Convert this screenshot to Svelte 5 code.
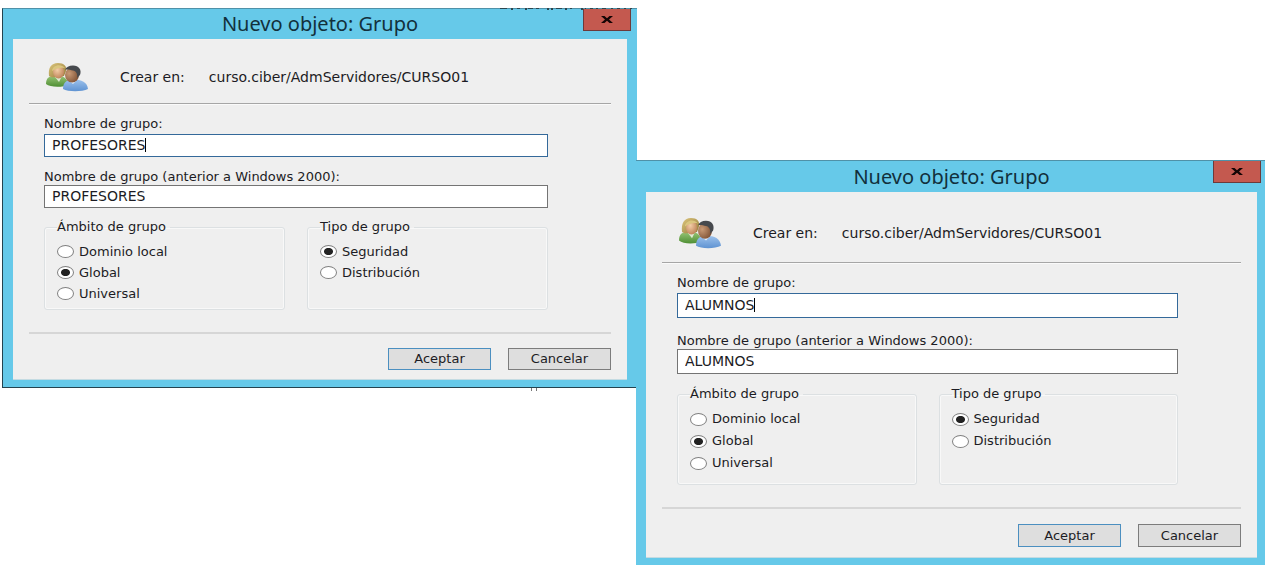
<script>
  const dialogs = [
    { id: 'profesores', name: 'PROFESORES', variant: 'compact' },
    { id: 'alumnos', name: 'ALUMNOS', variant: 'roomy' }
  ];
  const scopes = ['Dominio local', 'Global', 'Universal'];
  const kinds = ['Seguridad', 'Distribución'];
</script>

<main class="desktop">
  {#each dialogs as d}
    <section class="window {d.variant}" aria-labelledby="{d.id}-title">
      {#if d.variant === 'compact'}
        <svg class="remnant top" width="139" height="2" aria-hidden="true">
          <path d="M2 0h7v1h-7zM13 0h2v2h-2zM19 0h3v1h-3zM27 0h2v2h-2zM30 0h5v1h-5zM38 0h3v1h-3zM49 0h2v2h-2zM53 0h2v2h-2zM58 0h6v1h-6zM67 0h2v2h-2zM72 0h2v1h-2zM83 0h2v2h-2zM87 0h1v1h-1zM92 0h3v1h-3zM98 0h2v2h-2zM104 0h4v1h-4zM113 0h2v2h-2zM119 0h3v1h-3zM126 0h2v2h-2zM132 0h2v1h-2z" fill="#2c4650" />
        </svg>
        <svg class="remnant bottom" width="8" height="3" aria-hidden="true">
          <path d="M1.500 0v3M6.500 0v3" stroke="#777" stroke-width="1" />
        </svg>
      {/if}
      <header class="titlebar">
        <h1 id="{d.id}-title">Nuevo objeto: Grupo</h1>
        <button class="close" type="button" aria-label="Cerrar">
          <svg width="14" height="9" viewBox="0 0 14 9" aria-hidden="true">
            <path d="M1 1H4.500L7 3.200L9.500 1H13L9 4.500L13 8H9.500L7 5.800L4.500 8H1L5 4.500Z" fill="#150505" />
          </svg>
        </button>
      </header>
      <form class="client" onsubmit={(e) => e.preventDefault()}>
        <div class="place">
          <svg class="people" viewBox="0 0 44 30" preserveAspectRatio="none" aria-hidden="true">
            <defs>
              <linearGradient id="{d.id}-green" x1="0" y1="0" x2="0" y2="1">
                <stop offset="0" stop-color="#9ac779" /><stop offset="1" stop-color="#4f8f34" />
              </linearGradient>
              <linearGradient id="{d.id}-blue" x1="0" y1="0" x2="0" y2="1">
                <stop offset="0" stop-color="#9dc2ec" /><stop offset="1" stop-color="#5f93d2" />
              </linearGradient>
              <linearGradient id="{d.id}-hair" x1="0" y1="0" x2="1" y2="1">
                <stop offset="0" stop-color="#dcc67c" /><stop offset="1" stop-color="#94793a" />
              </linearGradient>
              <radialGradient id="{d.id}-fair" cx="0.4" cy="0.35" r="0.7">
                <stop offset="0" stop-color="#f3cda6" /><stop offset="1" stop-color="#bd8157" />
              </radialGradient>
              <radialGradient id="{d.id}-dark" cx="0.3" cy="0.4" r="0.8">
                <stop offset="0" stop-color="#c99a75" /><stop offset="1" stop-color="#76492d" />
              </radialGradient>
            </defs>
            <path d="M1 22C1 16 4 14 10 13.500C18 13 22 16 24 23C17 25.500 5 25.500 1 22Z" fill="url(#{d.id}-green)" />
            <path d="M10 15L14 20L17 14Z" fill="#dfead2" />
            <path d="M4 14C3 6 6 1 13 1C19 1 22 4 21 9L19 14L7 15.500Z" fill="url(#{d.id}-hair)" />
            <ellipse cx="13.500" cy="10" rx="5.500" ry="6.500" fill="url(#{d.id}-fair)" />
            <path d="M7 9C7 3 16 1 20 6C16 5 11 6 7 9Z" fill="#dac67f" />
            <path d="M18 27C18 20 22 17.500 28 17.500C37 17.500 42 20 43 27C37 30 23 30 18 27Z" fill="url(#{d.id}-blue)" />
            <path d="M23 18L28 22L32 18Z" fill="#e3eefa" />
            <ellipse cx="27" cy="13" rx="7" ry="7.500" fill="url(#{d.id}-dark)" />
            <path d="M20 8C21 5 24 3.500 28 3.500C34 3.500 37 8 35 13L32 16C33 12 31 9 28 8.500C25 8 22 7 20 8Z" fill="#46494d" />
          </svg>
          <span class="where">Crear en:</span>
          <span>curso.ciber/AdmServidores/CURSO01</span>
        </div>
        <hr class="fine" />
        <div class="fields">
          <label for="{d.id}-name">Nombre de grupo:</label>
          <div class="box active">
            <input id="{d.id}-name" value={d.name} />
            <span class="caret"></span>
          </div>
          <label class="second" for="{d.id}-old">Nombre de grupo (anterior a Windows 2000):</label>
          <div class="box"><input id="{d.id}-old" value={d.name} /></div>
          <div class="groups">
            <fieldset>
              <legend>Ámbito de grupo</legend>
              {#each scopes as s}
                <label class="option"><input type="radio" name="{d.id}-scope" value={s} checked={s === 'Global'} />{s}</label>
              {/each}
            </fieldset>
            <fieldset>
              <legend>Tipo de grupo</legend>
              {#each kinds as k}
                <label class="option"><input type="radio" name="{d.id}-kind" value={k} checked={k === 'Seguridad'} />{k}</label>
              {/each}
            </fieldset>
          </div>
        </div>
        <hr class="thick" />
        <div class="actions">
          <button class="push default" type="submit">Aceptar</button>
          <button class="push" type="button">Cancelar</button>
        </div>
      </form>
    </section>
  {/each}
</main>

<style>
  :global(body) { background: #fff; }

  .desktop {
    display: grid;
    grid-template-columns: 634fr 629fr;
    align-items: start;
    padding: 8px 4px 0 2px;
    font-family: "DejaVu Sans", sans-serif;
    font-size: 13px;
    line-height: 16px;
    color: #1c1c24;
  }

  .window {
    position: relative;
    box-sizing: border-box;
    background: #66c9e9;
    border-top: 1px solid #4f91a8;
  }
  .compact {
    --head: 30px; --icon: 30px; --place: 64px; --box: 23px; --gap: 12px;
    --row: 21px; --group: 91px; --groupgap: 11px; --push: 22px; --above: 14px; --foot: 9px;
    margin-right: -1px;
    border-left: 1px solid #24434f;
    border-bottom: 1px solid #24434f;
    padding: 0 10px 7px 10px;
  }
  .roomy {
    --head: 31px; --icon: 32px; --place: 70px; --box: 25px; --gap: 15px;
    --row: 22px; --group: 99px; --groupgap: 12px; --push: 23px; --above: 15px; --foot: 10px;
    margin-top: 152px;
    padding: 0 8px 7px 10px;
  }

  .remnant { position: absolute; display: block; }
  .top { top: -1px; right: 0; }
  .bottom { bottom: -4px; left: 527px; }

  .titlebar {
    position: relative;
    height: var(--head);
    display: flex;
    justify-content: center;
    align-items: center;
  }
  h1 {
    margin: 0;
    font: 400 20px/24px "Noto Sans", sans-serif;
    color: #12303c;
  }
  .close {
    position: absolute;
    top: 0;
    right: -4px;
    box-sizing: border-box;
    width: 48px;
    height: 22px;
    padding: 0;
    display: grid;
    place-items: center;
    background: #c4594f;
    border: 1px solid #6d3a3a;
    border-top: 0;
  }

  .client {
    box-sizing: border-box;
    background: #efefef;
    border-bottom: 1px solid #c4dbe2;
    padding: 0 16px var(--foot);
  }
  .place {
    display: flex;
    align-items: center;
    height: var(--place);
    padding: 12px 0 0 16px;
    box-sizing: border-box;
    font-size: 14px;
  }
  .people { width: 44px; height: var(--icon); }
  .where { margin: 0 24px 0 31px; }
  hr { margin: 0; border: 0; }
  .fine { height: 1px; background: #a6a6a6; border-bottom: 1px solid #fafafa; }
  .thick { height: 2px; background: #d6d6d6; margin-top: 22px; }

  .fields { padding: 11px 63px 0 15px; }
  .fields > label { display: block; margin-bottom: 2px; }
  .fields > .second { margin-top: var(--gap); margin-bottom: 0; }
  .box {
    display: flex;
    align-items: center;
    box-sizing: border-box;
    height: var(--box);
    padding: 0 7px 2px;
    background: #fff;
    border: 1px solid #747474;
    font-size: 14px;
  }
  .active { border-color: #34699a; }
  .box input {
    font: inherit;
    color: inherit;
    min-width: 0;
    padding: 0;
    border: 0;
    outline: 0;
    background: transparent;
    field-sizing: content;
  }
  .caret { width: 1px; height: 14px; background: #000; }

  .groups {
    display: grid;
    grid-template-columns: 1fr 1fr;
    gap: 22px;
    margin-top: var(--groupgap);
  }
  fieldset {
    box-sizing: border-box;
    height: var(--group);
    min-width: 0;
    margin: 0;
    padding: 6px 12px 0;
    border: 1px solid #dce0e2;
    border-radius: 3px;
    box-shadow: inset 0 0 0 1px #f8f8f8;
  }
  legend { padding: 0 4px 0 0; }
  .option {
    display: flex;
    align-items: center;
    gap: 5px;
    height: var(--row);
  }
  .option input {
    appearance: none;
    box-sizing: border-box;
    width: 17px;
    height: 13px;
    margin: 0;
    border: 1px solid #808080;
    border-radius: 50%;
    background: #fff;
  }
  .option input:checked {
    background: radial-gradient(ellipse 5px 4px at center, #222 80%, #fff 100%);
  }

  .actions {
    display: flex;
    justify-content: flex-end;
    gap: 17px;
    margin-top: var(--above);
  }
  .push {
    box-sizing: border-box;
    width: 103px;
    height: var(--push);
    padding: 0;
    font: inherit;
    color: inherit;
    background: #dedede;
    border: 1px solid #7c7c7c;
  }
  .default { border-color: #4b8fc0; }
</style>
